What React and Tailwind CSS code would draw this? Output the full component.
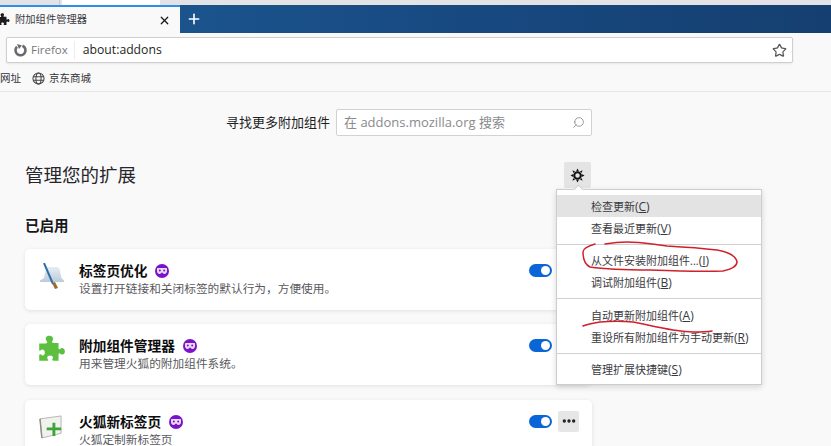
import React from 'react';
import { X, Plus, Star, Search, MoreHorizontal } from 'lucide-react';

const uiFont = '"Open Sans", "Noto Sans CJK SC", sans-serif';

const Gear = () => (
  <svg width="15" height="15" viewBox="0 0 16 16" fill="none">
    <circle cx="8" cy="8" r="3.500" stroke="#111" strokeWidth="2.200" />
    <g fill="#111">
      <path d="M6.500 3.500L8 .5l1.500 3zM6.500 12.500L8 15.500l1.500-3zM3.500 6.500L.5 8l3 1.500zM12.500 6.500L15.500 8l-3 1.500z" />
      <path d="M3.800 5.400L2.500 2.500l2.900 1.300zM10.600 3.800l2.900-1.300-1.300 2.900zM5.400 12.200l-2.900 1.300 1.300-2.900zM12.200 10.600l1.300 2.900-2.900-1.300z" />
    </g>
  </svg>
);

const PuzzleIcon = ({ size = 28, color = '#5cbf3f' }) => (
  <svg width={size} height={size} viewBox="0 0 28 28">
    <path
      fill={color}
      d="M11 1c2-1 5 0 5 2.500 0 1.500-1 2-1 3 0 .8 1 1 2.500 1H21v4.500c0 1.200.6 1.700 1.300 1.200 1.200-.9 2-1.400 3.200-.7 2 1.100 2 4.500 0 5.500-1.200.6-2-.1-3.200-.8-.7-.4-1.300.2-1.300 1.300V24h-4.500c-1.200 0-1.700-.7-1.200-1.500.7-1 .9-2-.3-2.800-1.700-1-4.500-.4-4.500 1.600 0 1 .7 1.500.9 2.200.2.500-.2.500-1.400.5H3v-5c0-1 1-1.200 1.800-.6 1 .8 2.200 1 3-.3 1-1.700.2-4.600-1.800-4.600-1 0-1.800.8-2.500 1.200-.3.200-.5 0-.5-.5V8h5c1.500 0 2.500-.4 2.500-1.200 0-1-1.500-1.800-1.500-3.300 0-1 .5-2 2-2.500z"
    />
  </svg>
);

const TabOptimizerIcon = () => (
  <svg width="26" height="26" viewBox="0 0 26 26">
    <defs>
      <linearGradient id="tabFill" x1="0" y1="0" x2="0" y2="1">
        <stop offset="0" stopColor="#e6edf3" />
        <stop offset="1" stopColor="#bccbd9" />
      </linearGradient>
    </defs>
    <path d="M7 6c0-1 1-2 2-2h9c1 0 2 1 2.500 2l2 9 2.500 2.500V19H1v-1.500L5 15z" fill="url(#tabFill)" />
    <path d="M5 0l9 21" stroke="#2f6ea8" strokeWidth="2" fill="none" />
    <path d="M13 20l3-1 3 6-3 1z" fill="#9a6a32" />
  </svg>
);

const NewTabIcon = () => (
  <svg width="25" height="24" viewBox="0 0 26 25">
    <path d="M1 4l22-3v18L3 24z" fill="#f1f1ee" stroke="#b5b5b0" strokeWidth="1" />
    <path d="M3 24l-2-20" stroke="#8d8d88" strokeWidth="1.500" />
    <path d="M14 8h3v5h6v3h-6v6h-3v-6H8v-3h6z" fill="#3fa33c" />
  </svg>
);

const BookmarkGlobe = () => (
  <svg width="13" height="13" viewBox="0 0 14 14" fill="none" stroke="#444" strokeWidth="1.100">
    <circle cx="7" cy="7" r="6" />
    <ellipse cx="7" cy="7" rx="2.800" ry="6" />
    <path d="M1.500 5h11M1.500 9h11" />
  </svg>
);

// the purple "recommended" mask badge next to each add-on name
const MaskBadge = () => (
  <span className="flex h-[14px] w-[14px] items-center justify-center rounded-full bg-[#7a12c9]">
    <svg width="10" height="6" viewBox="0 0 10 6">
      <path
        fill="#e8dcf5"
        d="M1 0h8c.6 0 1 .4 1 1v2c0 1.500-1 3-2.500 3C6 6 5.800 4.500 5 4.500S4 6 2.500 6C1 6 0 4.500 0 3V1c0-.6.400-1 1-1z"
      />
      <circle cx="2.800" cy="2.600" r="1" fill="#7a12c9" />
      <circle cx="7.200" cy="2.600" r="1" fill="#7a12c9" />
    </svg>
  </span>
);

const Toggle = () => (
  <span className="flex h-[13px] w-[23px] items-center justify-end rounded-full bg-[#0a66d8] pr-[2px]">
    <span className="h-[9px] w-[9px] rounded-full bg-white" />
  </span>
);

const AddonCard = ({ icon, iconBox, name, desc, more, className }) => (
  <div className={`flex h-[61px] w-[567px] shrink-0 rounded-[5px] bg-white pl-[14px] pr-[13px] pt-[13px] shadow-[0_1px_4px_rgba(12,12,13,0.1)] ${className}`}>
    <div className={`flex w-[40px] shrink-0 justify-start ${iconBox}`}>{icon}</div>
    <div className="flex min-w-0 flex-1 flex-col">
      <div className="flex h-[18px] items-center gap-[8px]">
        <span className="text-[13.700px] font-bold leading-[18px] text-[#0c0c0d]">{name}</span>
        <MaskBadge />
      </div>
      <div className="-mt-px text-[11.700px] leading-[18px] text-[#5a5a5e]">{desc}</div>
    </div>
    <div className="flex h-[16px] shrink-0 items-center gap-[6px]">
      <Toggle />
      {more ? (
        <span className="flex h-[21px] w-[21px] items-center justify-center rounded-[2px] bg-[#e6e6e7]">
          <MoreHorizontal size={16} strokeWidth={3} color="#1a1a1a" />
        </span>
      ) : (
        <span className="w-[21px]" />
      )}
    </div>
  </div>
);

const MenuItem = ({ label, hot, active }) => (
  <div className={`flex h-[22px] items-center whitespace-nowrap pl-[34px] pt-[2px] text-[11px] text-[#3a3a3e] ${active ? 'bg-[#e3e3e3]' : ''}`}>
    <span>{label}</span>
    <span className="text-[12px]">(<span className="underline">{hot}</span>)</span>
  </div>
);

const MenuLine = ({ className }) => <div className={`h-px bg-[#d0d0d0] ${className}`} />;

const App = () => {
  return (
    <div className="relative flex h-[446px] w-[831px] flex-col overflow-hidden bg-[#f9f9fa]" style={{ fontFamily: uiFont }}>
      {/* Top sliver of the window behind the tab strip */}
      <div className="flex h-[5px] shrink-0 bg-[#e3e3e5]">
        <div className="ml-[59px] w-px bg-[#c9c9cb]" />
        <div className="ml-[2px] w-[98px] bg-white" />
      </div>

      {/* Tab strip */}
      <div className="flex h-[28px] shrink-0 bg-[linear-gradient(90deg,#1d5a94,#17487f_60%,#153f70)]">
        <div className="flex w-[180px] items-center border-t-2 border-[#2f8fe8] bg-[#f9f9fa] pr-[9px]">
          <div className="-ml-[4px] mr-[5px] flex shrink-0"><PuzzleIcon size={14} color="#1a1a1a" /></div>
          <span className="flex-1 text-[10.300px] text-[#3a3a3e]">附加组件管理器</span>
          <X size={13} strokeWidth={2.200} color="#111" />
        </div>
        <div className="flex w-[28px] items-center justify-center">
          <Plus size={16} strokeWidth={2.400} color="#fff" />
        </div>
      </div>

      {/* URL bar */}
      <div className="flex h-[33px] shrink-0 items-start bg-[#f9f9fa] pl-[6px] pr-[38px] pt-[4px]">
        <div className="flex h-[26px] flex-1 items-center rounded-[2px] border border-[#cfcfd1] bg-white pl-[6px] pr-[5px] shadow-[0_1px_2px_rgba(0,0,0,0.08)]">
          <svg width="15" height="15" viewBox="0 0 15 15" fill="none">
            <path d="M9.500 2.700a5 5 0 1 1-5.500 1" stroke="#6a6a6e" strokeWidth="2.600" />
            <path d="M4 1l5 1.500L6 6z" fill="#6a6a6e" />
          </svg>
          <span className="ml-[3px] text-[11.500px] text-[#77777b]">Firefox</span>
          <span className="ml-[6px] mr-[8px] h-[18px] w-px bg-[#ececec]" />
          <span className="flex-1 pt-px text-[12.200px] text-[#1f1f23]">about:addons</span>
          <Star size={15} strokeWidth={2} color="#55555a" />
        </div>
      </div>

      {/* Bookmarks */}
      <div className="flex h-[26px] shrink-0 items-center border-b border-[#e6e6e7] text-[10.500px] text-[#333337]">
        <span>网址</span>
        <span className="ml-[11px] mr-[4px] flex"><BookmarkGlobe /></span>
        <span>京东商城</span>
      </div>

      {/* Page body */}
      <div className="flex flex-1 flex-col pl-[25px]">
        <div className="mt-[17px] flex h-[27px] w-[567px] shrink-0 items-center justify-end">
          <span className="mr-[6px] text-[13px] text-[#1f1f23]">寻找更多附加组件</span>
          <div className="flex h-[27px] w-[256px] items-center justify-between rounded-[2px] border border-[#d2d2d4] bg-white pl-[7px] pr-[6px]">
            <span className="text-[13px] text-[#8a8a8e]">在 addons.mozilla.org 搜索</span>
            <Search size={13} strokeWidth={1.300} color="#77777b" className="-scale-x-100" />
          </div>
        </div>

        <div className="mt-[26px] flex h-[26px] w-[567px] shrink-0 items-center justify-between">
          <h1 className="text-[18.500px] font-normal text-[#26262a]">管理您的扩展</h1>
          <span className="mr-px flex h-[26px] w-[27px] items-center justify-center rounded-[2px] bg-[#e4e4e5]"><Gear /></span>
        </div>

        <h2 className="mt-[28px] text-[14.500px] font-bold leading-[20px] text-[#17171a]">已启用</h2>

        <AddonCard className="mt-[13px]" iconBox="pt-px" icon={<TabOptimizerIcon />} name="标签页优化" desc="设置打开链接和关闭标签的默认行为，方便使用。" />
        <AddonCard className="mt-[14px]" iconBox="-ml-[3px] -mt-[2px] w-[43px]" icon={<PuzzleIcon size={30} />} name="附加组件管理器" desc="用来管理火狐的附加组件系统。" />
        <AddonCard className="mt-[15px]" iconBox="pt-[2px]" icon={<NewTabIcon />} name="火狐新标签页" desc="火狐定制新标签页" more />
      </div>

      {/* Gear dropdown */}
      <div className="absolute left-[556px] top-[189px] w-[206px] border border-[#cdcdcf] bg-white pb-[4px] pt-[5px] shadow-[0_2px_6px_rgba(0,0,0,0.15)]">
        <span className="absolute -top-[4.500px] left-[17.500px] h-[7px] w-[7px] rotate-45 border-l border-t border-[#cdcdcf] bg-white" />
        <MenuItem label="检查更新" hot="C" active />
        <MenuItem label="查看最近更新" hot="V" />
        <MenuLine className="mb-[4px] mt-[5px]" />
        <MenuItem label="从文件安装附加组件..." hot="I" />
        <MenuItem label="调试附加组件" hot="B" />
        <MenuLine className="mb-[5px] mt-[5px]" />
        <MenuItem label="自动更新附加组件" hot="A" />
        <MenuItem label="重设所有附加组件为手动更新" hot="R" />
        <MenuLine className="mb-[4px] mt-[5px]" />
        <MenuItem label="管理扩展快捷键" hot="S" />
      </div>

      {/* Red hand-drawn annotations */}
      <svg className="pointer-events-none absolute left-0 top-0" width="831" height="446" fill="none" stroke="#d0202a" strokeWidth="1.500" strokeLinecap="round">
        <path d="M595 244C588 246 583 248 583 252C583 260 586 265 590 267C610 270 630 270 650 270C675 271 700 272 723 271C732 269 737 266 737 262C736 256 728 252 717 250C700 248 685 247 667 246C650 244 640 242 627 242C618 242 611 243 605 244" />
        <path d="M583 326C588 324 594 323 600 322C612 321 622 321 633 322C648 325 660 328 673 330C680 331 686 332 693 332C700 332 706 332 712 331" />
      </svg>
    </div>
  );
};

export default App;
